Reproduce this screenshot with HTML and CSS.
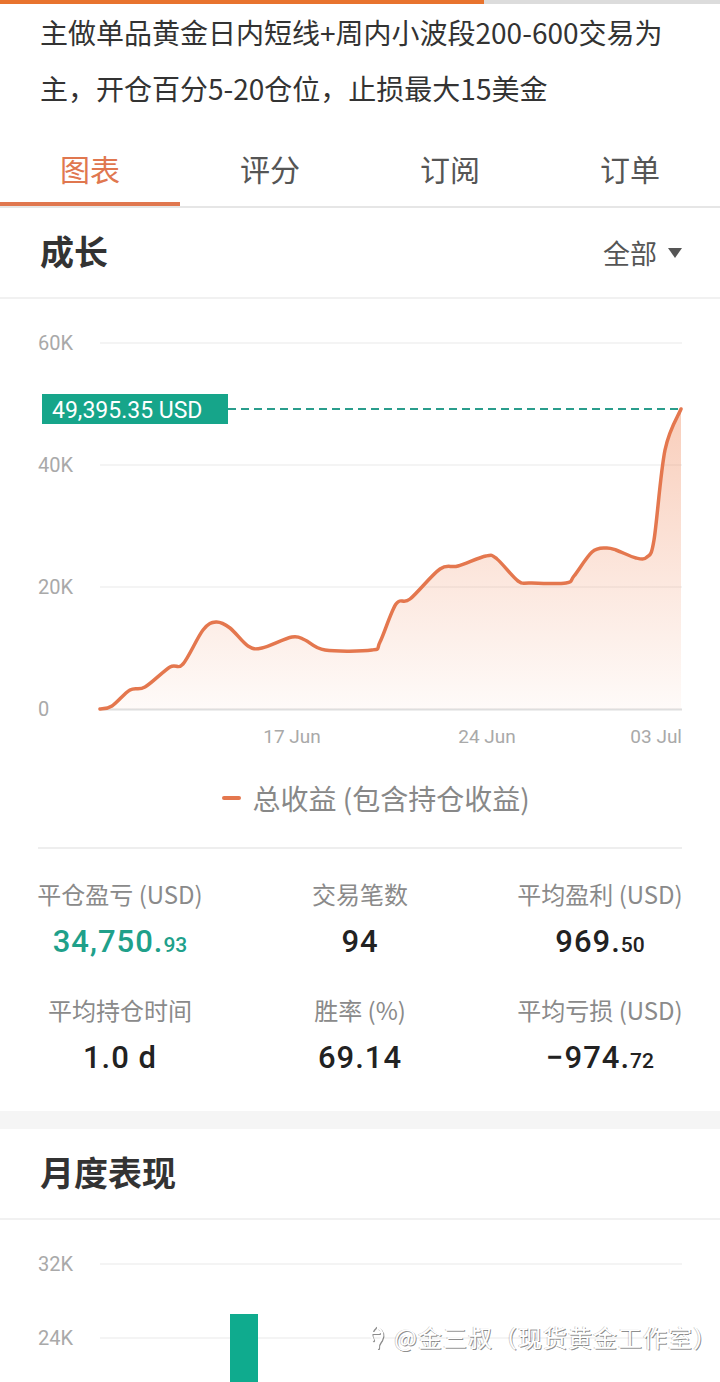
FILE: index.html
```
<!DOCTYPE html>
<html lang="zh-CN">
<head>
    <meta charset="UTF-8">
    <meta name="viewport" content="width=device-width, initial-scale=1.0">
    <title>信号详情</title>
    <link rel="stylesheet" href="styles.css">
</head>
<body>
<div class="page">
    <div class="progress"><div class="progress-fill"></div></div>

    <p class="intro">主做单品黄金日内短线+周内小波段200-600交易为主，开仓百分5-20仓位，止损最大15美金</p>

    <nav class="tabs">
        <div class="tab active">图表</div>
        <div class="tab">评分</div>
        <div class="tab">订阅</div>
        <div class="tab">订单</div>
    </nav>

    <section class="card">
        <div class="card-head">
            <h2>成长</h2>
            <div class="range">全部<span class="caret"></span></div>
        </div>

        <svg class="growth-chart" width="720" height="461" viewBox="0 299 720 461">
            <defs>
                <linearGradient id="areaFill" x1="0" y1="0" x2="0" y2="1">
                    <stop offset="0" stop-color="#f08a5d" stop-opacity="0.42"/>
                    <stop offset="1" stop-color="#f08a5d" stop-opacity="0.04"/>
                </linearGradient>
            </defs>
            <g class="grid">
                <line x1="100" y1="343" x2="682" y2="343"/>
                <line x1="100" y1="465" x2="682" y2="465"/>
                <line x1="100" y1="587" x2="682" y2="587"/>
            </g>
            <line class="axis" x1="100" y1="709.5" x2="682" y2="709.5"/>
            <g class="y-labels">
                <text x="38" y="350">60K</text>
                <text x="38" y="472">40K</text>
                <text x="38" y="594">20K</text>
                <text x="38" y="716">0</text>
            </g>
            <path id="growth-area" class="area" fill="url(#areaFill)" d=""/>
            <path id="growth-line" class="curve" d=""/>
            <line class="target" x1="228" y1="409" x2="682" y2="409"/>
            <rect class="tag" x="42" y="394" width="186" height="30"/>
            <text class="tag-text" x="52" y="418">49,395.35 USD</text>
            <g class="x-labels">
                <text x="292" y="743" text-anchor="middle">17 Jun</text>
                <text x="487" y="743" text-anchor="middle">24 Jun</text>
                <text x="682" y="743" text-anchor="end">03 Jul</text>
            </g>
        </svg>

        <div class="legend"><span class="legend-dash"></span>总收益 (包含持仓收益)</div>

        <div class="divider"></div>

        <div class="stats">
            <div class="stat">
                <div class="stat-label">平仓盈亏 (USD)</div>
                <div class="stat-value green">34,750.<small>93</small></div>
            </div>
            <div class="stat">
                <div class="stat-label">交易笔数</div>
                <div class="stat-value">94</div>
            </div>
            <div class="stat">
                <div class="stat-label">平均盈利 (USD)</div>
                <div class="stat-value">969.<small>50</small></div>
            </div>
            <div class="stat">
                <div class="stat-label">平均持仓时间</div>
                <div class="stat-value">1.0 d</div>
            </div>
            <div class="stat">
                <div class="stat-label">胜率 (%)</div>
                <div class="stat-value">69.14</div>
            </div>
            <div class="stat">
                <div class="stat-label">平均亏损 (USD)</div>
                <div class="stat-value">−974.<small>72</small></div>
            </div>
        </div>
    </section>

    <div class="gap"></div>

    <section class="card">
        <div class="card-head">
            <h2>月度表现</h2>
        </div>
        <svg class="monthly-chart" width="720" height="200" viewBox="0 1220 720 200">
            <g class="grid">
                <line x1="100" y1="1264" x2="682" y2="1264"/>
                <line x1="100" y1="1338" x2="682" y2="1338"/>
            </g>
            <g class="y-labels">
                <text x="38" y="1271">32K</text>
                <text x="38" y="1345">24K</text>
            </g>
            <rect class="bar" x="230" y="1314" width="28" height="120"/>
        </svg>
    </section>

    <div class="watermark">
        <svg class="wm-logo" width="22" height="26" viewBox="0 0 22 26">
            <path d="M7 3 C3 6 2 12 5 16 M10 4 C14 6 16 11 13 16 C11 19 9 20 10 24 M5 9 L11 9"/>
        </svg>
        <span>@金三叔（现货黄金工作室）</span>
    </div>
</div>

<script>
    // equity curve, points in page coordinates of the chart svg
    const points = [
        [100, 709], [112, 706], [130, 690], [145, 687], [170, 667], [183, 664],
        [203, 630], [216, 622], [230, 628], [248, 646], [262, 648], [292, 637],
        [305, 640], [325, 650], [372, 650], [380, 642], [396, 604], [410, 599],
        [440, 569], [458, 566], [486, 556], [497, 559], [518, 581], [530, 583],
        [566, 583], [574, 576], [592, 552], [606, 548], [616, 550], [636, 558],
        [647, 557], [654, 540], [665, 450], [681, 409]
    ];

    function smoothPath(pts) {
        let d = `M${pts[0][0]},${pts[0][1]}`;
        for (let i = 0; i < pts.length - 1; i++) {
            const p0 = pts[i - 1] || pts[i];
            const p1 = pts[i];
            const p2 = pts[i + 1];
            const p3 = pts[i + 2] || p2;
            const c1x = p1[0] + (p2[0] - p0[0]) / 6;
            const c1y = p1[1] + (p2[1] - p0[1]) / 6;
            const c2x = p2[0] - (p3[0] - p1[0]) / 6;
            const c2y = p2[1] - (p3[1] - p1[1]) / 6;
            d += ` C${c1x.toFixed(1)},${c1y.toFixed(1)} ${c2x.toFixed(1)},${c2y.toFixed(1)} ${p2[0]},${p2[1]}`;
        }
        return d;
    }

    const line = smoothPath(points);
    document.getElementById("growth-line").setAttribute("d", line);
    document.getElementById("growth-area").setAttribute("d", line + " L681,709 L100,709 Z");
</script>
</body>
</html>
```

FILE: styles.css
```
body {
    margin: 0;
    background: #fff;
    font-family: "Noto Sans CJK SC", "Noto Sans", sans-serif;
    color: #333;
}
.page {
    position: relative;
    width: 720px;
    overflow: hidden;
}
.progress {
    height: 4px;
    background: #dcdcdc;
}
.progress-fill {
    width: 484px;
    height: 100%;
    background: #e8732e;
}
.intro {
    margin: 0;
    padding: 0 40px 14px;
    font-size: 28px;
    line-height: 56px;
    color: #333;
}
.tabs {
    display: flex;
    border-bottom: 2px solid #e6e6e6;
}
.tab {
    flex: 1;
    text-align: center;
    font-size: 30px;
    line-height: 68px;
    padding-top: 4px;
    color: #555;
    border-bottom: 4px solid transparent;
}
.tab.active {
    color: #e0774f;
    border-bottom-color: #e0774f;
}
.card-head {
    display: flex;
    align-items: center;
    justify-content: space-between;
    height: 89px;
    padding: 0 38px 0 40px;
    border-bottom: 2px solid #f1f1f1;
}
.card-head h2 {
    margin: 0 0 3px;
    font-size: 34px;
    line-height: 44px;
    font-weight: 700;
    color: #333;
}
.range {
    display: flex;
    align-items: center;
    font-size: 27px;
    color: #555;
}
.caret {
    margin-left: 11px;
    width: 0;
    height: 0;
    border-left: 7px solid transparent;
    border-right: 7px solid transparent;
    border-top: 10px solid #555;
}
svg {
    display: block;
}
.grid line {
    stroke: #f1f1f1;
    stroke-width: 1.5;
}
.axis {
    stroke: #dedede;
    stroke-width: 2;
}
.y-labels text,
.x-labels text {
    font-family: Roboto, "Noto Sans", sans-serif;
    font-size: 20px;
    fill: #a9a9a9;
}
.x-labels text {
    font-size: 19px;
}
.curve {
    fill: none;
    stroke: #e4774e;
    stroke-width: 3.5;
    stroke-linecap: round;
    stroke-linejoin: round;
}
.target {
    stroke: #2a9d8c;
    stroke-width: 2;
    stroke-dasharray: 8 5;
}
.tag {
    fill: #16a58a;
}
.tag-text {
    font-family: Roboto, "Noto Sans", sans-serif;
    font-size: 23px;
    fill: #fff;
}
.legend {
    display: flex;
    align-items: center;
    justify-content: center;
    height: 76px;
    padding-left: 32px;
    font-size: 28px;
    color: #888;
}
.legend-dash {
    width: 19px;
    height: 4px;
    border-radius: 2px;
    background: #e4774e;
    margin-right: 11px;
}
.divider {
    margin: 11px 38px 0;
    border-top: 2px solid #eeeeee;
}
.stats {
    display: grid;
    grid-template-columns: repeat(3, 1fr);
    row-gap: 27px;
    padding: 28px 0 29px;
    text-align: center;
}
.stat-label {
    font-size: 24px;
    line-height: 34px;
    color: #8a8a8a;
}
.stat-value {
    margin-top: 7px;
    font-family: Roboto, "Noto Sans", sans-serif;
    font-size: 31px;
    font-weight: 500;
    line-height: 48px;
    height: 48px;
    color: #222;
    letter-spacing: 1px;
}
.stat-value small {
    font-size: 21px;
    line-height: 1;
    letter-spacing: 0;
}
.stat-value.green {
    color: #20a08a;
}
.gap {
    height: 18px;
    background: #f5f5f5;
}
.bar {
    fill: #0fab8e;
}
.watermark {
    position: absolute;
    right: 2px;
    top: 1320px;
    display: flex;
    align-items: center;
    gap: 4px;
    font-size: 24px;
    line-height: 34px;
    letter-spacing: 1px;
    white-space: nowrap;
    color: #fff;
    text-shadow: 1px 1px 0 rgba(0, 0, 0, 0.45), -1px 0 0 rgba(0, 0, 0, 0.2);
}
.wm-logo path {
    fill: none;
    stroke: #fff;
    stroke-width: 2.2;
    stroke-linecap: round;
    filter: drop-shadow(1px 1px 0 rgba(0, 0, 0, 0.45));
}
```
